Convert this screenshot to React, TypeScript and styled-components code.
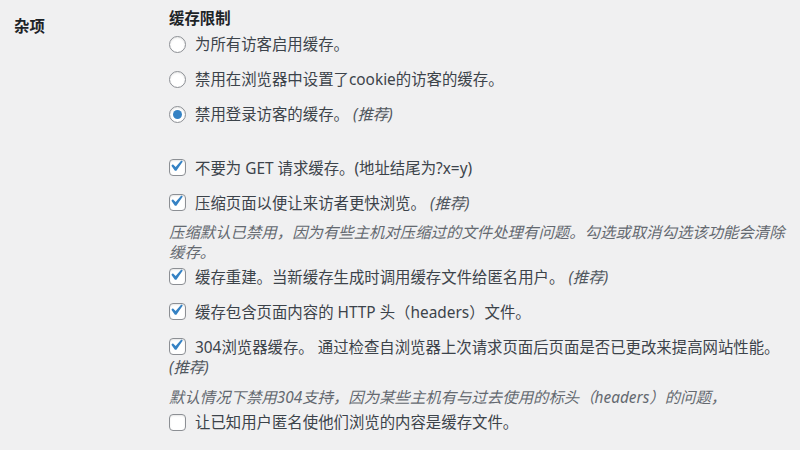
import styled, { createGlobalStyle } from "styled-components";

const GlobalStyle = createGlobalStyle`
  html, body {
    margin: 0;
    padding: 0;
    background: #f0f0f1;
    overflow: hidden;
  }
  body {
    font-family: "Noto Sans", "Noto Sans CJK SC", sans-serif;
    font-size: 15.4px;
    color: #3c434a;
  }
`;

const Row = styled.div`
  display: flex;
  align-items: flex-start;
`;

const Th = styled.div`
  width: 155px;
  padding: 17px 0 0 14px;
  line-height: 20px;
  font-weight: 600;
  color: #1d2327;
`;

const Td = styled.div`
  width: 630px;
  padding-top: 9px;
  line-height: 20px;
`;

const Legend = styled.div`
  font-weight: 600;
  color: #1d2327;
  margin-bottom: 6px;
`;

const Option = styled.label<{ $gap?: number }>`
  display: block;
  margin-top: ${({ $gap }) => ($gap ?? 15)}px;
  line-height: 20px;

  &:first-of-type {
    margin-top: ${({ $gap }) => ($gap ?? 0)}px;
  }
`;

const Radio = styled.span<{ $checked?: boolean }>`
  display: inline-block;
  box-sizing: border-box;
  width: 17px;
  height: 17px;
  border: 1px solid #8c8f94;
  border-radius: 50%;
  background: #fff;
  box-shadow: inset 0 1px 2px rgba(0, 0, 0, 0.1);
  vertical-align: -3px;
  margin-right: 9px;
  position: relative;

  &::before {
    content: "";
    display: ${({ $checked }) => ($checked ? "block" : "none")};
    position: absolute;
    left: 3px;
    top: 3px;
    width: 9px;
    height: 9px;
    border-radius: 50%;
    background: #3582c4;
  }
`;

const Box = styled.span`
  display: inline-flex;
  align-items: center;
  justify-content: center;
  box-sizing: border-box;
  width: 17px;
  height: 17px;
  border: 1px solid #8c8f94;
  border-radius: 4px;
  background: #fff;
  box-shadow: inset 0 1px 2px rgba(0, 0, 0, 0.1);
  vertical-align: -3px;
  margin-right: 9px;
  overflow: visible;

  svg {
    width: 22px;
    height: 22px;
    margin: -3px 0 0 -3px;
    flex: none;
  }
`;

const Recommend = styled.em`
  font-style: italic;
  color: #50575e;
`;

const Description = styled.p<{ $gap: number }>`
  margin: ${({ $gap }) => $gap}px 0 0;
  font-style: italic;
  color: #646970;
  line-height: 20px;
`;

const Check = ({ checked }: { checked: boolean }) => (
  <Box>
    {checked && (
      <svg viewBox="0 0 20 20">
        <path
          d="M14.83 4.89l1.34.94-5.81 8.38H9.02L5.78 9.67l1.34-1.25 2.57 2.4z"
          fill="#3582c4"
        />
      </svg>
    )}
  </Box>
);

export default function App() {
  return (
    <>
      <GlobalStyle />
      <Row>
        <Th>杂项</Th>
        <Td>
          <Legend>缓存限制</Legend>
          <Option>
            <Radio />
            为所有访客启用缓存。
          </Option>
          <Option>
            <Radio />
            禁用在浏览器中设置了cookie的访客的缓存。
          </Option>
          <Option>
            <Radio $checked />
            禁用登录访客的缓存。 <Recommend>(推荐)</Recommend>
          </Option>

          <Option $gap={34}>
            <Check checked />
            不要为 GET 请求缓存。(地址结尾为?x=y)
          </Option>
          <Option>
            <Check checked />
            压缩页面以便让来访者更快浏览。 <Recommend>(推荐)</Recommend>
          </Option>
          <Description $gap={9}>
            压缩默认已禁用，因为有些主机对压缩过的文件处理有问题。勾选或取消勾选该功能会清除缓存。
          </Description>
          <Option $gap={5}>
            <Check checked />
            缓存重建。当新缓存生成时调用缓存文件给匿名用户。 <Recommend>(推荐)</Recommend>
          </Option>
          <Option>
            <Check checked />
            缓存包含页面内容的 HTTP 头（headers）文件。
          </Option>
          <Option>
            <Check checked />
            304浏览器缓存。 通过检查自浏览器上次请求页面后页面是否已更改来提高网站性能。 <Recommend>(推荐)</Recommend>
          </Option>
          <Description $gap={10}>
            默认情况下禁用304支持，因为某些主机有与过去使用的标头（headers）的问题，
          </Description>
          <Option $gap={5}>
            <Check checked={false} />
            让已知用户匿名使他们浏览的内容是缓存文件。
          </Option>
        </Td>
      </Row>
    </>
  );
}
